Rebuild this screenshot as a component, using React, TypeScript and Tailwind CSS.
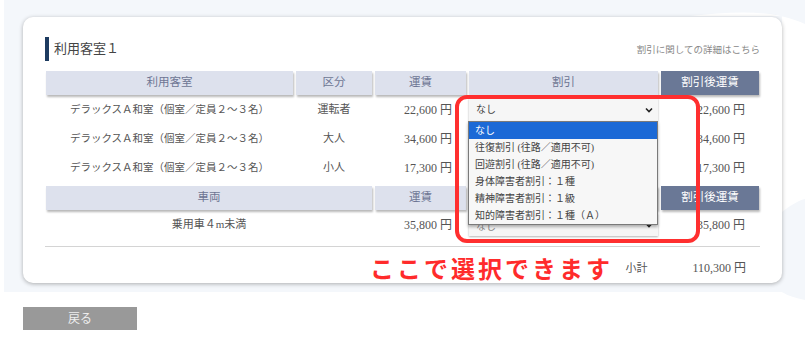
import React from 'react';

const serif = { fontFamily: '"Liberation Serif", "Noto Sans CJK JP", serif' };

const rooms = [
  { name: 'デラックスＡ和室（個室／定員２～３名）', type: '運転者', fare: '22,600 円', after: '22,600 円' },
  { name: 'デラックスＡ和室（個室／定員２～３名）', type: '大人', fare: '34,600 円', after: '34,600 円' },
  { name: 'デラックスＡ和室（個室／定員２～３名）', type: '小人', fare: '17,300 円', after: '17,300 円' },
];

const options = [
  'なし',
  '往復割引 (往路／適用不可)',
  '回遊割引 (往路／適用不可)',
  '身体障害者割引：１種',
  '精神障害者割引：１級',
  '知的障害者割引：１種（Ａ）',
];

function Head({ w, dark, children }: { w: string; dark?: boolean; children?: React.ReactNode }) {
  return (
    <div
      className={`${w} h-[24px] flex items-center justify-center text-[11.5px] shadow-[1px_2px_2px_rgba(0,0,0,0.28)] ${
        dark ? 'bg-[#6a7896] text-white' : 'bg-[#dde1ed] text-[#6e7694]'
      }`}
    >
      {children}
    </div>
  );
}

function Select({ faded }: { faded?: boolean }) {
  return (
    <div className="w-[190px] h-[23px] bg-[#f6f6f6] shadow-[0_1px_2px_rgba(0,0,0,0.3)] flex items-end justify-between pl-[7px] pr-[5px] pb-[4px] text-[10px] text-[#444]">
      <span className={faded ? 'opacity-60 leading-[10px]' : 'leading-[14px]'}>{faded ? 'なし' : 'なし'}</span>
      <svg width="8" height="6" viewBox="0 0 8 6" className="mb-[4px]">
        <path d="M1 1.5 L4 4.5 L7 1.5" stroke="#222" strokeWidth="1.6" fill="none" />
      </svg>
    </div>
  );
}

export default function App() {
  return (
    <div className="relative w-[805px] h-[351px] overflow-hidden bg-white" style={serif}>
      {/* soft background wave */}
      <svg className="absolute inset-0" width="805" height="351" viewBox="0 0 805 351">
        <path d="M4 0 H805 V24 C770 8 730 12 690 16 L782 16 V292 L4 292 Z" fill="#f4f7fb" />
        <path d="M782 212 C792 204 800 200 805 199 V300 C796 298 788 296 782 292 Z" fill="#f4f7fb" />
      </svg>

      <div className="relative pt-[17px] pl-[23px]">
        <div className="relative w-[759px] h-[266px] bg-white rounded-[10px] shadow-[0_1px_4px_rgba(0,0,0,0.3)] pt-[20px] pl-[22px] pr-[22px]">
          {/* title */}
          <div className="flex items-center justify-between h-[24px]">
            <div className="flex items-center h-full">
              <div className="w-[4px] h-full bg-[#1d3b60]" />
              <span className="ml-[5px] text-[13px] text-[#444]">利用客室１</span>
            </div>
            <span className="text-[9.5px] text-[#888] pt-[2px]">割引に関しての詳細はこちら</span>
          </div>

          {/* room table */}
          <div className="mt-[10px] pl-[1px]">
            <div className="flex gap-[3px]">
              <Head w="w-[247px]">利用客室</Head>
              <Head w="w-[76px]">区分</Head>
              <Head w="w-[91px]">運賃</Head>
              <Head w="w-[189px]">割引</Head>
              <Head w="w-[98px]" dark>
                割引後運賃
              </Head>
            </div>
            {rooms.map((r, i) => (
              <div key={i} className="flex gap-[3px] h-[29px] items-center text-[10.5px] text-[#555]">
                <div className="w-[247px] text-center">{r.name}</div>
                <div className="w-[76px] text-center text-[11px]">{r.type}</div>
                <div className="w-[91px] text-right pr-[14px] text-[12px]">{r.fare}</div>
                <div className="w-[189px] flex">{i === 0 && <Select />}</div>
                <div className="w-[98px] text-right pr-[14px] text-[12px]">{r.after}</div>
              </div>
            ))}

            {/* vehicle table */}
            <div className="flex gap-[3px] mt-[4px]">
              <Head w="w-[326px]">車両</Head>
              <Head w="w-[91px]">運賃</Head>
              <Head w="w-[189px]" />
              <Head w="w-[98px]" dark>
                割引後運賃
              </Head>
            </div>
            <div className="flex gap-[3px] h-[29px] items-center text-[11px] text-[#555]">
              <div className="w-[326px] text-center">乗用車４m未満</div>
              <div className="w-[91px] text-right pr-[14px] text-[12px]">35,800 円</div>
              <div className="w-[189px] flex">
                <Select faded />
              </div>
              <div className="w-[98px] text-right pr-[14px] text-[12px]">35,800 円</div>
            </div>
          </div>

          <div className="mt-[7px] border-t border-[#d4d4d4]" />

          <div className="flex justify-end items-center h-[42px] text-[11px] text-[#555] pr-[14px]">
            <span className="mr-[45px]">小計</span>
            <span className="text-[12px]">110,300 円</span>
          </div>

          {/* open dropdown list */}
          <div className="absolute left-[445px] top-[104px] w-[190px] bg-[#f7f7f7] border border-[#7a7a7a] shadow-[0_2px_3px_rgba(0,0,0,0.3)] text-[10px] text-[#444]">
            {options.map((o, i) => (
              <div
                key={o}
                className={`h-[17px] flex items-center pl-[6px] ${i === 0 ? 'bg-[#1b69d6] text-white' : ''}`}
              >
                {o}
              </div>
            ))}
          </div>

          {/* annotation */}
          <div className="absolute left-[432px] top-[78px] w-[245px] h-[148px] border-[4px] border-[#ff2f2f] rounded-[12px]" />
          <div
            className="absolute left-[347px] top-[236px] text-[24px] font-bold leading-[30px] tracking-[3px] text-[#ff2b2b]"
            style={{ fontFamily: '"Noto Sans CJK JP", sans-serif' }}
          >
            ここで選択できます
          </div>
        </div>

        <button className="mt-[24px] w-[114px] h-[23px] bg-[#999999] text-[#eeeeee] text-[12px] flex items-center justify-center">
          戻る
        </button>
      </div>
    </div>
  );
}
